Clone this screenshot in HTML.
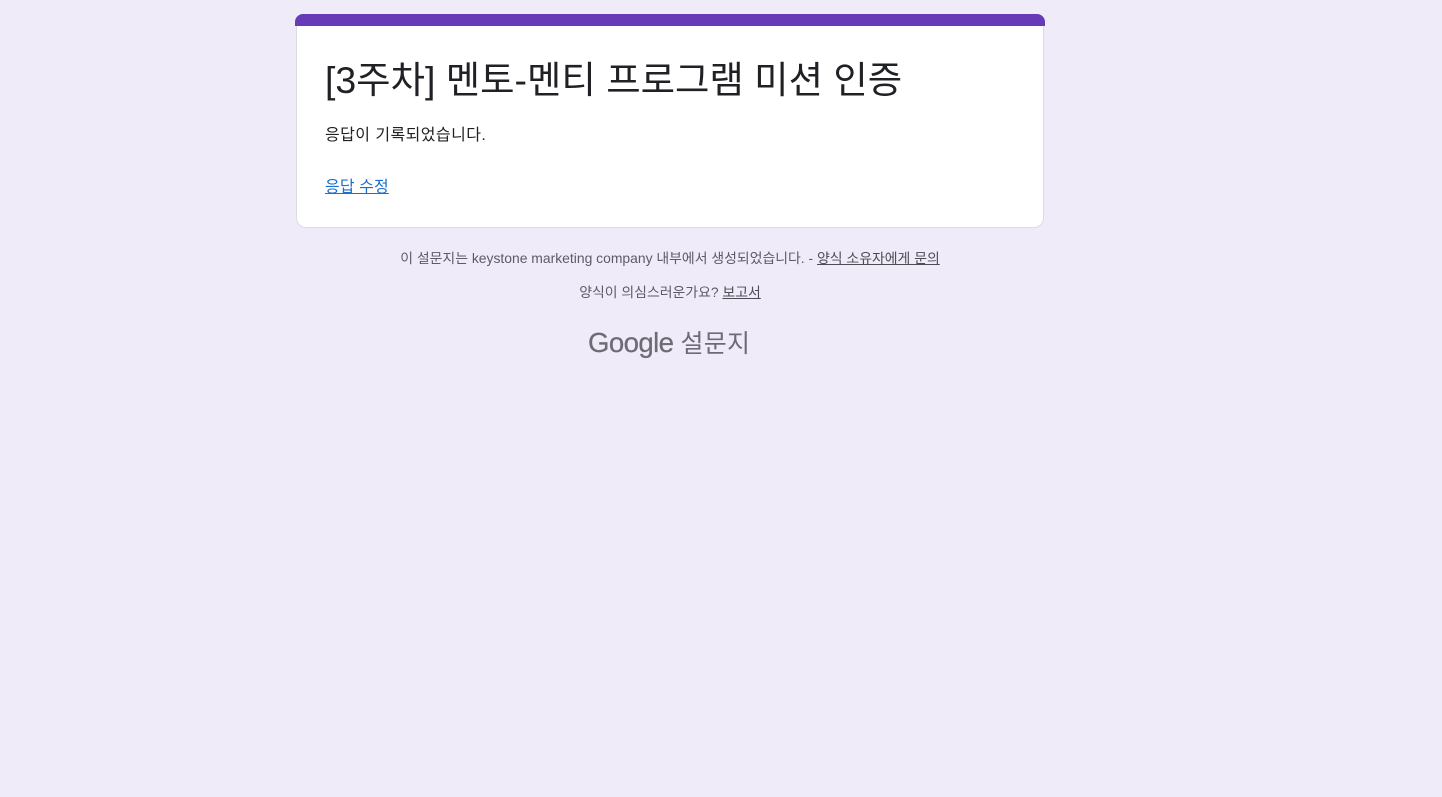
<!DOCTYPE html>
<html lang="ko"><head><meta charset="utf-8"><title>[3주차] 멘토-멘티 프로그램 미션 인증</title>
<style>
html,body{margin:0;padding:0;width:1442px;height:797px;overflow:hidden;background:#f0ebf8;font-family:"Liberation Sans","Noto Sans CJK KR",sans-serif}
.a{position:absolute;white-space:nowrap}
#card{left:296px;top:14px;width:746px;height:212px;background:#fff;border:1px solid #dadce0;border-radius:10px}
#bar{left:295px;top:14px;width:750px;height:12px;background:#673ab7;border-radius:8px 8px 0 0}
#title{left:325px;top:56px;font-size:37.4px;line-height:48px;color:#202124}
#msg{left:325px;top:124px;font-size:16px;line-height:24px;color:#202124;letter-spacing:.43px}
#edit{left:325px;top:176px;font-size:16px;line-height:24px;color:#1a6fd0;text-decoration:underline;letter-spacing:.1px}
.f{font-size:13.9px;line-height:20px;color:#5f5a66;width:748px;left:296px;text-align:center}
.f u{color:#4f4b55}
#logo{left:588px;top:324px;font-size:27.6px;line-height:38px;color:#6f6b76;letter-spacing:-.6px;-webkit-text-stroke:.25px #6f6b76}
#logo span{letter-spacing:.3px;margin-left:0;font-size:25px;-webkit-text-stroke:0}
</style></head><body>
<div class="a" id="card"></div>
<div class="a" id="bar"></div>
<div class="a" id="title">[3주차] 멘토-멘티 프로그램 미션 인증</div>
<div class="a" id="msg">응답이 기록되었습니다.</div>
<div class="a" id="edit">응답 수정</div>
<div class="a f" style="top:248px">이 설문지는 keystone marketing company 내부에서 생성되었습니다. - <u>양식 소유자에게 문의</u></div>
<div class="a f" style="top:282px">양식이 의심스러운가요? <u>보고서</u></div>
<div class="a" id="logo">Google <span>설문지</span></div>
</body></html>
